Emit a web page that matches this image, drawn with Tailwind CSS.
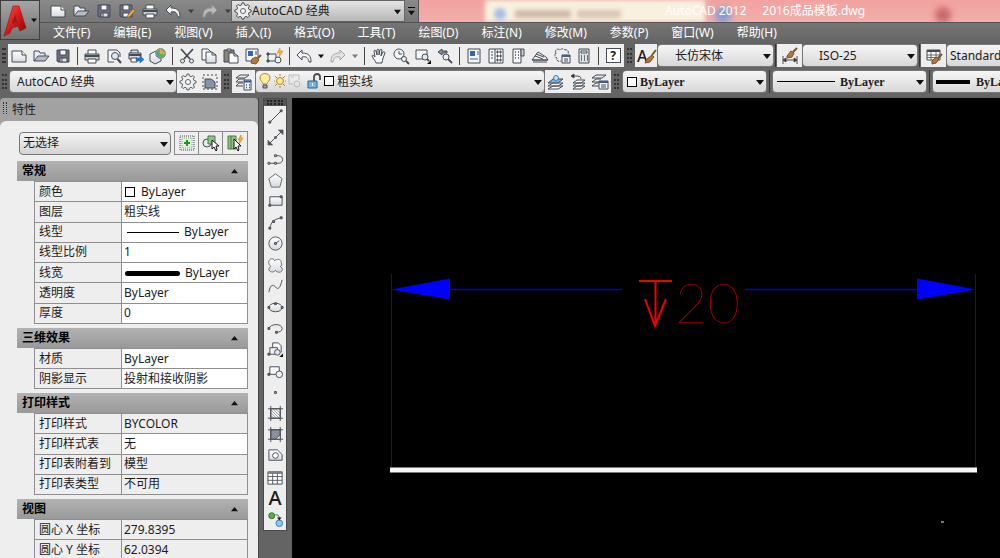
<!DOCTYPE html>
<html lang="zh-CN">
<head>
    <meta charset="UTF-8">
    <meta name="viewport" content="width=device-width, initial-scale=1.0">
    <title>AutoCAD 2012 - 2016成品模板.dwg</title>
    <script src="https://cdn.jsdelivr.net/npm/@tailwindcss/browser@4"></script>
</head>
<body class="h-screen flex flex-col overflow-hidden bg-[#646464] text-xs text-[#1c1c1c] font-['Noto_Sans','Noto_Sans_CJK_SC',sans-serif] [&_svg]:fill-none [&_svg]:stroke-[#454c57]">

    <!-- Icon set, colours inherited from the svg that uses each symbol -->
    <svg class="absolute size-0">
        <defs>
            <linearGradient id="paper" x1="0" y1="0" x2="0" y2="1"><stop offset="0" stop-color="#fff"/><stop offset="1" stop-color="#d5d9e0"/></linearGradient>
            <linearGradient id="red" x1="0" y1="0" x2="1" y2="1"><stop offset="0" stop-color="#ff5a50"/><stop offset=".5" stop-color="#d81818"/><stop offset="1" stop-color="#7e0808"/></linearGradient>
        </defs>
        <symbol id="new" viewBox="0 0 18 18"><path d="M2 4h10l4 4v7H2z" fill="url(#paper)"/><path d="M12 4v4h4" fill="#fff"/></symbol>
        <symbol id="open" viewBox="0 0 18 18"><path d="M2 14V4h5l1 2h5v3" fill="#e8ebef"/><path d="M2 14l4-5h11l-4 5z" fill="#b4becb"/></symbol>
        <symbol id="save" viewBox="0 0 18 18"><path d="M3 3h12v12H4l-1-1z" fill="#66707e"/><path d="M6 3h6v5H6z" fill="#f4f6f8"/><path d="M6 11h7v4H6z" fill="#dfe3e8"/><path d="M8 11v4"/></symbol>
        <symbol id="saveas" viewBox="0 0 18 18"><path d="M2 3h12v12H3l-1-1z" fill="#66707e"/><path d="M5 3h6v5H5zM5 11h6v4H5z" fill="#f4f6f8"/><path d="M9 16l1-3 5-6 2 1.500-5 6z" fill="#f0b24a" stroke="#a8641c"/></symbol>
        <symbol id="print" viewBox="0 0 18 18"><path d="M5 7V3h8v4" fill="#fff"/><path d="M2 7h14v6H2z" fill="#c9ced5"/><path d="M2 9h14" stroke-width="2"/><path d="M5 12h8v4H5z" fill="#fff"/></symbol>
        <symbol id="preview" viewBox="0 0 18 18"><path d="M9 15H3V3h9l3 3v4" fill="#f4f5f7"/><circle cx="10" cy="9" r="3.500" fill="#dfe8f2"/><path d="M12.500 12l3.500 4" stroke-width="2"/></symbol>
        <symbol id="publish" viewBox="0 0 18 18"><path d="M4 6V3h7v3M2 6h12v6H2z" fill="#d8dce1"/><path d="M2 8h12" stroke-width="2"/><path d="M4 11h6v4H4z" fill="#fff"/><path d="M9 11h4V9l4 3.500-4 3.500v-2H9z" fill="#2478c8" stroke="#1f5f9f" stroke-width=".5"/></symbol>
        <symbol id="globe" viewBox="0 0 18 18"><path d="M1 7l6-3 5 3v7l-6 3-5-3z" fill="url(#paper)"/><circle cx="11.500" cy="6.500" r="5" fill="#62b25c" stroke="#8a9198"/><path d="M11 2c2 1 4 2 5 5l-5 0z" fill="#f0a03c" stroke="none"/><path d="M8 4l3 5-2 1z" fill="#4f8fdc" stroke="none"/></symbol>
        <symbol id="cut" viewBox="0 0 18 18"><path d="M3 2l9 10M15 2L6 12" stroke-width="1.800"/><circle cx="4.500" cy="14" r="2"/><circle cx="13.500" cy="14" r="2"/></symbol>
        <symbol id="copy" viewBox="0 0 18 18"><path d="M2 2h6l3 3v8H2z" fill="#fafafa"/><path d="M6 5h6l4 3v8H6z" fill="url(#paper)"/><path d="M12 5v3h4"/></symbol>
        <symbol id="paste" viewBox="0 0 18 18"><path d="M2 3h10v12H2z" fill="#8a8377"/><path d="M5 2h4v2H5z" fill="#ddd"/><path d="M7 6h5l4 3v7H7z" fill="#fafbfc"/><path d="M12 6v3h4"/></symbol>
        <symbol id="match" viewBox="0 0 18 18"><path d="M2 2h12v12H2z" fill="#f3f5f7"/><path d="M4 4h5v5H4z" fill="#2f69b5" stroke="none"/><path d="M11 5h2M11 7h2"/><path d="M8 12l4-2 3 3-3 4-5-1z" fill="#b5763b" stroke="#8a5323"/><path d="M14 11l3-3" stroke="#8a5323" stroke-width="2"/></symbol>
        <symbol id="blockedit" viewBox="0 0 18 18"><path d="M2 7h8v7H2z" fill="#eef0f3"/><circle cx="12" cy="13" r="3" fill="#eef0f3"/><path d="M1 13h2v2H1zM1 6h2v2H1z" fill="#454c57"/><path d="M14 1l-3 5h3l-1 4 4-6h-3z" fill="#f7b928" stroke="#cf8a18" stroke-width=".6"/></symbol>
        <symbol id="undo" viewBox="0 0 18 18"><path d="M7 3L2 8l5 5v-3c5-1 6 1 7 5h2c0-6-2-9-9-9z" fill="#f6f7f8"/></symbol>
        <symbol id="redo" viewBox="0 0 18 18"><path d="M11 3l5 5-5 5v-3c-5-1-6 1-7 5H2c0-6 2-9 9-9z" fill="#e4e4e4" stroke="#a5a5a5"/></symbol>
        <symbol id="pan" viewBox="0 0 18 18"><path d="M6 16c0-2-3-4-4-7 0-1 1-1 2 0l1 1-1-6c0-1 2-1 2 0l1 4V3c0-1 2-1 2 0v5l1-5c0-1 2-1 2 0l-1 6 2-4c1-1 2 0 2 1l-2 5c0 2-1 3-1 5z" fill="#f6f7fa"/></symbol>
        <symbol id="zoomrt" viewBox="0 0 18 18"><circle cx="7" cy="7" r="5" fill="#f4f6f8"/><path d="M7 4v3h3"/><circle cx="12" cy="12" r="2.500" fill="#eef2f6"/><path d="M14 14l3 3" stroke-width="1.800"/></symbol>
        <symbol id="zoomwin" viewBox="0 0 18 18"><path d="M2 3h11v9H2z" fill="#f4f6f8"/><circle cx="11" cy="10" r="3" fill="#e2e9f2"/><path d="M13 12l2 2" stroke-width="1.800"/><path d="M17 13v4h-4z" fill="#111" stroke="none"/></symbol>
        <symbol id="zoomprev" viewBox="0 0 18 18"><path d="M6 2L2 5l4 3V6h5V4H6z" fill="#7e8ea3"/><circle cx="10" cy="10" r="3" fill="#eef2f6"/><path d="M12 12l4 4" stroke-width="1.800"/></symbol>
        <symbol id="props" viewBox="0 0 18 18"><path d="M3 2h12v14H3z" fill="#f4f6f8"/><path d="M5 4h5v5H5z" fill="#2f69b5" stroke="none"/><path d="M12 5h2M12 7h2M5 12h8" stroke="#2f69b5"/></symbol>
        <symbol id="design" viewBox="0 0 18 18"><path d="M2 2h14v14H2zM8 2v14" fill="#f4f6f8"/><path d="M4 5h2M4 8h2M4 11h2"/><path d="M10 4h1v2h-1zM13 4h1v2h-1zM10 8h1v2h-1zM13 8h1v2h-1zM10 12h1v2h-1zM13 12h1v2h-1z" fill="#4b7fb8"/></symbol>
        <symbol id="palettes" viewBox="0 0 18 18"><path d="M4 2h8v14H4z" fill="#f4f6f8"/><path d="M12 2h3v7h-3z" fill="#c8ced7"/><path d="M6 5h1M9 5h1M6 8h1M9 8h1M6 11h1M9 11h1" stroke-width="1.600"/></symbol>
        <symbol id="sheets" viewBox="0 0 18 18"><path d="M1 13L7 5l8 5 2 3z" fill="#eef0f3"/><path d="M4 9l8 3M5 7l8 3M1 13h16M2 15h14"/></symbol>
        <symbol id="markup" viewBox="0 0 18 18"><path d="M3 6c-2-3 2-5 4-3 2-2 4-1 5 0 3-1 4 2 3 4M3 6c-2 2-1 5 1 5-1 3 2 4 4 3" stroke-dasharray="3 1"/><path d="M9 8h8v8H9z" fill="#f5f6f8"/><path d="M9 9h8" stroke-width="2" stroke="#3d5f8d"/><path d="M11 12h4M11 14h4"/></symbol>
        <symbol id="calc" viewBox="0 0 18 18"><path d="M4 2h10v14H4z" fill="#dfe4ea"/><path d="M6 4h6v2H6z" fill="#fff"/><path d="M6 9h1M9 9h1M12 9h1M6 11h1M9 11h1M12 11h1M6 13h1M9 13h1M12 13h1" stroke-width="1.400"/></symbol>
        <symbol id="gear" viewBox="0 0 18 18"><path d="M8 1h2l.5 2 1.500.7 2-1.200 1.500 1.500L14.300 6l.7 1.500 2 .5v2l-2 .5-.7 1.500 1.200 2-1.500 1.500-2-1.200-1.500.7-.5 2H8l-.5-2L6 14.300l-2 1.200L2.500 14l1.200-2L3 10.500 1 10V8l2-.5L3.700 6 2.500 4 4 2.500l2 1.200L7.500 3z" fill="#eceef0" stroke="#5c6166"/><circle cx="9" cy="9" r="2.500" fill="#fff" stroke="#5c6166"/></symbol>
        <symbol id="wssave" viewBox="0 0 18 18"><path d="M2 2h14v14H2z" stroke-dasharray="2 2"/><path d="M4 6h6l4 3v6H4z" fill="#8594a6"/></symbol>
        <symbol id="layerprops" viewBox="0 0 18 18"><path d="M1 5l4-3h9l-4 3zM1 9l3-3h6M1 13l3-3h4M1 9h7M1 13h7"/><path d="M9 7h7v10H9z" fill="#edf1f6"/><path d="M9 8.500h7" stroke="#355e93" stroke-width="2"/><path d="M11 12h1M14 12h1M11 14.500h1M14 14.500h1" stroke="#355e93" stroke-width="1.400"/></symbol>
        <symbol id="layers" viewBox="0 0 18 18"><path d="M1 16l5-3h10l-5 3zM1 13l5-3h10l-5 3z" fill="#fff"/><path d="M1 10l5-4h10l-5 4z" fill="#78b3e2"/><circle cx="9" cy="5" r="2.500" fill="#c5e0f2" stroke="#3d7fb5"/></symbol>
        <symbol id="layerback" viewBox="0 0 18 18"><path d="M4 16l4-3h8l-4 3zM4 13l4-3h8l-4 3zM4 10l4-3h8l-4 3z" fill="#f8f8f8"/><path d="M12 6c0-3-3-3-7-3"/><path d="M5 1L2 3l3 2z" fill="#222"/></symbol>
        <symbol id="layerstate" viewBox="0 0 18 18"><path d="M1 5l4-3h10l-4 3zM1 9l4-3h5M1 13l4-3h3M1 9h7M1 13h7"/><path d="M8 8h9v8H8z" fill="#f5f7f9"/><path d="M8 9h9" stroke="#355e93" stroke-width="2"/><path d="M10 12h5M10 14h5"/></symbol>
        <symbol id="bulb" viewBox="0 0 14 18"><path d="M5 12c0-2-3-3-3-6 0-6 10-6 10 0 0 3-3 4-3 6z" fill="#ffec9e" stroke="#a98d3a"/><path d="M5 13h4v3H5z" fill="#aaa"/></symbol>
        <symbol id="sun" viewBox="0 0 14 18"><circle cx="7" cy="9" r="3.500" fill="#ffe883" stroke="#a98d3a"/><path d="M7 2v2M7 14v2M1 9h1M12 9h1M2 4l2 2M10 12l2 2M12 4l-2 2M4 12l-2 2" stroke="#a98d3a"/></symbol>
        <symbol id="vpfreeze" viewBox="0 0 14 18"><path d="M1 3h10v5M1 3v9h4M3 5h3" stroke="#bbb"/><circle cx="9" cy="12" r="3" stroke="#bbb"/></symbol>
        <symbol id="lock" viewBox="0 0 14 18"><path d="M7 9V5c0-4 6-4 6 0v3" stroke-width="1.800"/><path d="M1 9h9v7H1z" fill="#6fb7e6" stroke="#2d6389"/><path d="M5.500 11v3" stroke="#fff"/></symbol>
        <symbol id="textstyle" viewBox="0 0 20 18"><path d="M10 13l5-4 2 2-4 5-5 1z" fill="#b5763b" stroke="#80501f"/><path d="M15 9l4-5" stroke="#80501f" stroke-width="2"/></symbol>
        <symbol id="dimstyle" viewBox="0 0 18 18"><path d="M2 9v8M16 9v8M2 13h14"/><path d="M2 13l3-2v4zM16 13l-3-2v4z" fill="#333"/><path d="M6 9l4-5 3 2-2 4-5 1z" fill="#b5763b" stroke="#80501f"/><path d="M12 5l4-4" stroke="#80501f" stroke-width="2"/></symbol>
        <symbol id="tablestyle" viewBox="0 0 18 18"><path d="M2 3h13v10H2z" fill="#fff"/><path d="M2 4h13" stroke-width="2"/><path d="M2 8h13M2 10.500h13M6 4v9M11 4v9" stroke-width=".8"/><path d="M7 14l4-4 3 2-3 4-4 1z" fill="#b5763b" stroke="#80501f"/><path d="M13 11l4-4" stroke="#80501f" stroke-width="2"/></symbol>
        <symbol id="pickadd" viewBox="0 0 18 18"><path d="M2 2h14v14H2z" stroke-dasharray="1 1"/><path d="M4 4h10v10H4z" fill="#e2f3e0" stroke="#7aa578" stroke-dasharray="1 1"/><path d="M9 6v6M6 9h6" stroke="#179a17" stroke-width="2"/></symbol>
        <symbol id="pick" viewBox="0 0 18 18"><circle cx="5" cy="9" r="4" fill="#e8efe6"/><path d="M6 2h7v8H6z" fill="#8fc285" stroke="#4c7a45"/><path d="M10 6v9l2-2 2 4 1-1-1-4h3z" fill="#fff" stroke="#111"/></symbol>
        <symbol id="quick" viewBox="0 0 18 18"><path d="M2 2h8v13H2z" fill="#8fc285" stroke="#4c7a45"/><path d="M5 2v13" stroke="#4c7a45"/><path d="M8 5v10l2-2 2 4 1-1-1-4h3z" fill="#fff" stroke="#111"/><path d="M15 1l-3 5h2l-1 4 4-6h-2z" fill="#f7b928" stroke="#d8741a" stroke-width=".6"/></symbol>

        <symbol id="line" viewBox="0 0 18 18"><path d="M3 15L15 3"/><path d="M2 14h2v2H2zM14 2h2v2h-2z" fill="#777"/></symbol>
        <symbol id="xline" viewBox="0 0 18 18"><path d="M3 15L15 3"/><path d="M1 17v-5l5 5zM17 1v5l-5-5zM8 8h2v2H8z" fill="#555" stroke-width=".6"/></symbol>
        <symbol id="pline" viewBox="0 0 18 18"><path d="M2 13h10c6 0 6-8 0-8H9"/><path d="M1 12h2v2H1zM8 12h2v2H8zM8 4h2v2H8z" fill="#ddd"/></symbol>
        <symbol id="polygon" viewBox="0 0 18 18"><path d="M9 2l7 5-2.500 9h-9L2 7z" fill="url(#paper)" stroke="#666"/></symbol>
        <symbol id="rect" viewBox="0 0 18 18"><path d="M3 4h13v9H3z" fill="url(#paper)"/><path d="M2 12h2v2H2zM14 3h2v2h-2z" fill="#777"/></symbol>
        <symbol id="arc" viewBox="0 0 18 18"><path d="M3 16C4 8 8 5 16 4"/><path d="M2 14h2v2H2zM6 7h2v2H6zM14 3h2v2h-2z" fill="#777"/></symbol>
        <symbol id="circle" viewBox="0 0 18 18"><circle cx="9" cy="9" r="7" fill="url(#paper)" stroke="#555"/><path d="M9 9l4-3M8 8h2v2H8z"/></symbol>
        <symbol id="cloud" viewBox="0 0 18 18"><path d="M8 4c3-3 8-1 7 2 1 2 1 3-1 4 4 2 2 7-2 6-2 0-3-2-3-2-2 3-7 2-7-1 0-2 2-3 2-3C0 7 2 1 6 2c1 0 2 1 2 2z" fill="url(#paper)" stroke="#666"/></symbol>
        <symbol id="spline" viewBox="0 0 18 18"><path d="M2 15c1-5 2-8 5-7s3 5 6 2c1-1 2-4 3-8"/></symbol>
        <symbol id="ellipse" viewBox="0 0 18 18"><ellipse cx="9" cy="9" rx="7" ry="4.500" fill="url(#paper)"/><path d="M1 8h2v2H1zM8 4h2v2H8zM15 8h2v2h-2z" fill="#777"/></symbol>
        <symbol id="ellarc" viewBox="0 0 18 18"><path d="M2 9c1-5 14-6 14 0 0 3-3 4-6 4"/><path d="M1 8h2v2H1zM9 12h2v2H9z" fill="#777"/></symbol>
        <symbol id="insert" viewBox="0 0 18 18"><path d="M6 8V2h6l3 3v7" fill="#f8f8f8"/><path d="M3 7h8v7H3z" fill="#eef0f3"/><circle cx="11" cy="12" r="3" fill="#dde4ec"/><path d="M1 13h2v2H1z" fill="#555"/><path d="M17 13v4h-4z" fill="#111" stroke="none"/></symbol>
        <symbol id="block" viewBox="0 0 18 18"><path d="M3 4h10v8H3z" fill="#f6f7f9"/><circle cx="13" cy="12" r="3.500" fill="#eef0f3"/><path d="M1 11h2v2H1z" fill="#555"/></symbol>
        <symbol id="point" viewBox="0 0 18 18"><path d="M8 8h2v2H8z" fill="#aaa"/></symbol>
        <symbol id="hatch" viewBox="0 0 18 18"><path d="M4 4h10v10H4z" fill="#fafafa"/><path d="M4 1v16M14 1v16M1 4h16M1 14h16"/><path d="M4 5l9 9M4 8l6 6M6 4l8 8M9 4l5 5M4 11l3 3" stroke-width=".6"/></symbol>
        <symbol id="gradient" viewBox="0 0 18 18"><path d="M4 4h10v10H4z" fill="#8b919b"/><path d="M4 1v16M14 1v16M1 4h16M1 14h16"/><path d="M9 14l5-5v5z" fill="#e6e9ee"/></symbol>
        <symbol id="region" viewBox="0 0 18 18"><path d="M2 3h9l5 5v6H2z" fill="url(#paper)"/><circle cx="9" cy="9" r="3" fill="#fff"/></symbol>
        <symbol id="table" viewBox="0 0 18 18"><path d="M1 3h15v13H1z" fill="#fff"/><path d="M1 4h15" stroke-width="2.500" stroke="#7a7f88"/><path d="M1 8h15M1 12h15M6 5v11M11 5v11" stroke-width=".9"/></symbol>
        <symbol id="addsel" viewBox="0 0 18 18"><circle cx="5" cy="5" r="3.200" fill="#59ad4a" stroke="#35722b"/><circle cx="13" cy="13" r="3.500" fill="#8cc8f4" stroke="#3a7db1"/><path d="M9 4c3 0 4 1 4 4"/><path d="M10.500 7h5l-2.500 3z" fill="#222" stroke="none"/></symbol>
        <symbol id="down" viewBox="0 0 8 8"><path d="M0 2h8L4 7z" fill="#111" stroke="none"/></symbol>
        <symbol id="up" viewBox="0 0 8 8"><path d="M0 6h8L4 1z" fill="#111" stroke="none"/></symbol>
    </svg>

    <header class="flex shrink-0 bg-gradient-to-b from-[#8a8a8a] to-[#646464]">
        <!-- Application menu -->
        <button aria-label="应用程序菜单" class="flex items-center justify-center gap-1 w-10 h-10 shrink-0 border border-[#3f3f3f] bg-gradient-to-b from-[#a5a5a5] to-[#727272]">
            <svg class="w-6 h-9" viewBox="0 0 24 36"><path d="M10 4h6l7 22-6 3-2-5-6 2-2 5-6 3z" fill="url(#red)" stroke="#8e1010" stroke-width=".6"/><path d="M12 12l2 8-5 2z" fill="#8b2020" stroke="none"/><path d="M10 4L1 34l3-10z" fill="#ff8c80" stroke="none"/></svg>
            <svg class="size-[6px]"><use href="#down"/></svg>
        </button>

        <div class="flex-1 min-w-0">
            <div class="flex h-[23px] border-b border-[#555]">
                <!-- Quick access -->
                <div class="flex items-center pl-[6px] [&_button]:w-[23px] [&_button]:flex [&_button]:justify-center [&_svg]:size-[18px]">
                    <button aria-label="新建"><svg><use href="#new"/></svg></button>
                    <button aria-label="打开"><svg><use href="#open"/></svg></button>
                    <button aria-label="保存"><svg><use href="#save"/></svg></button>
                    <button aria-label="另存为"><svg><use href="#saveas"/></svg></button>
                    <button aria-label="打印"><svg><use href="#print"/></svg></button>
                    <button aria-label="放弃"><svg><use href="#undo"/></svg></button>
                    <svg class="size-[6px]! mx-1 opacity-60"><use href="#down"/></svg>
                    <button aria-label="重做"><svg class="opacity-60"><use href="#redo"/></svg></button>
                    <svg class="size-[6px]! ml-1 opacity-60"><use href="#down"/></svg>
                </div>
                <div class="relative w-[174px]">
                    <svg class="absolute left-[3px] top-[2px] size-[18px]"><use href="#gear"/></svg>
                    <select aria-label="工作空间" class="appearance-none w-full h-[22px] pl-[20px] border border-[#666] bg-gradient-to-b from-[#e4e4e4] to-[#b8b8b8]"><option>AutoCAD 经典</option></select>
                    <svg class="absolute left-[3px] top-[2px] size-[18px] pointer-events-none"><use href="#gear"/></svg>
                    <svg class="absolute right-[4px] top-2 size-[7px]"><use href="#down"/></svg>
                </div>
                <button aria-label="自定义快速访问工具栏" class="flex flex-col items-center justify-center gap-px w-[14px] border-r border-[#555]">
                    <span class="w-[7px] h-px bg-black"></span>
                    <svg class="size-[7px]"><use href="#down"/></svg>
                </button>
                <!-- Window caption -->
                <div class="relative flex-1 flex items-center overflow-hidden bg-gradient-to-b from-[#f1a2a0] to-[#f3adaa]">
                    <div class="absolute left-[66px] w-[220px] h-full bg-[#f8f1df] blur-[2px]"></div>
                    <div class="absolute left-[75px] top-2 size-3 rounded-full bg-[#a9bce8] blur-[2px]"></div>
                    <div class="absolute left-[96px] top-[10px] w-14 h-2 bg-[#cdb9a9] blur-[2px]"></div>
                    <div class="absolute left-[158px] top-[10px] w-11 h-2 bg-[#d9c6b5] blur-[2px]"></div>
                    <div class="absolute left-[296px] top-[7px] size-4 rounded-full bg-[#7b9ed8] blur-[3px]"></div>
                    <div class="absolute left-[516px] top-[7px] size-4 rounded-full bg-[#c96868] blur-[3px]"></div>
                    <h1 class="relative pl-[246px] flex gap-4 text-white whitespace-nowrap"><span>AutoCAD 2012</span><span>2016成品模板.dwg</span></h1>
                </div>
            </div>
            <!-- Menu bar -->
            <nav class="flex items-center h-5 pl-[13px] gap-[23px] text-white whitespace-nowrap">
                <a href="#">文件(F)</a>
                <a href="#">编辑(E)</a>
                <a href="#">视图(V)</a>
                <a href="#">插入(I)</a>
                <a href="#">格式(O)</a>
                <a href="#">工具(T)</a>
                <a href="#">绘图(D)</a>
                <a href="#">标注(N)</a>
                <a href="#">修改(M)</a>
                <a href="#">参数(P)</a>
                <a href="#">窗口(W)</a>
                <a href="#">帮助(H)</a>
            </nav>
        </div>
    </header>

    <!-- Standard toolbar + styles -->
    <div class="flex shrink-0 mt-px h-[23px] overflow-hidden">
        <div class="w-2 shrink-0 py-1 px-[2px]"><div class="h-full border-x-2 border-dotted border-[#333]"></div></div>
        <div class="flex shrink-0 items-center bg-[#eee] [&_button]:w-[22px] [&_button]:flex [&_button]:justify-center [&_svg]:size-[18px] [&_hr]:w-px [&_hr]:h-[18px] [&_hr]:mx-[3px] [&_hr]:border-0 [&_hr]:bg-[#444]">
            <button aria-label="新建"><svg><use href="#new"/></svg></button>
            <button aria-label="打开"><svg><use href="#open"/></svg></button>
            <button aria-label="保存"><svg><use href="#save"/></svg></button>
            <hr>
            <button aria-label="打印"><svg><use href="#print"/></svg></button>
            <button aria-label="打印预览"><svg><use href="#preview"/></svg></button>
            <button aria-label="发布"><svg><use href="#publish"/></svg></button>
            <button aria-label="三维DWF"><svg><use href="#globe"/></svg></button>
            <hr>
            <button aria-label="剪切"><svg><use href="#cut"/></svg></button>
            <button aria-label="复制"><svg><use href="#copy"/></svg></button>
            <button aria-label="粘贴"><svg><use href="#paste"/></svg></button>
            <button aria-label="特性匹配"><svg><use href="#match"/></svg></button>
            <button aria-label="块编辑器"><svg><use href="#blockedit"/></svg></button>
            <hr>
            <button aria-label="放弃"><svg><use href="#undo"/></svg></button>
            <svg class="size-[6px]! mx-[3px]"><use href="#down"/></svg>
            <button aria-label="重做"><svg><use href="#redo"/></svg></button>
            <svg class="size-[6px]! mx-[3px] opacity-50"><use href="#down"/></svg>
            <hr>
            <button aria-label="平移"><svg><use href="#pan"/></svg></button>
            <button aria-label="实时缩放"><svg><use href="#zoomrt"/></svg></button>
            <button aria-label="窗口缩放"><svg><use href="#zoomwin"/></svg></button>
            <button aria-label="缩放上一个"><svg><use href="#zoomprev"/></svg></button>
            <hr>
            <button aria-label="特性"><svg><use href="#props"/></svg></button>
            <button aria-label="设计中心"><svg><use href="#design"/></svg></button>
            <button aria-label="工具选项板"><svg><use href="#palettes"/></svg></button>
            <button aria-label="图纸集"><svg><use href="#sheets"/></svg></button>
            <button aria-label="标记集"><svg><use href="#markup"/></svg></button>
            <button aria-label="计算器"><svg><use href="#calc"/></svg></button>
            <hr>
            <button aria-label="帮助"><span class="size-[15px] border border-[#454c57] bg-white text-xs leading-[13px] font-bold">?</span></button>
        </div>
        <div class="w-[11px] shrink-0 py-1 px-[3px]"><div class="h-full border-x-2 border-dotted border-[#333]"></div></div>
        <button aria-label="文字样式" class="relative w-[22px] shrink-0 bg-[#eee] text-left pl-[2px] text-base leading-5 font-medium">A<svg class="absolute left-[2px] top-[2px] w-5 h-[18px]"><use href="#textstyle"/></svg></button>
        <div class="relative w-[117px] shrink-0">
            <select aria-label="文字样式" class="appearance-none w-full h-full pl-[17px] rounded-sm border border-[#777] bg-gradient-to-b from-[#f6f6f6] to-[#d8d8d8]"><option>长仿宋体</option></select>
            <svg class="absolute right-[3px] top-2 size-2"><use href="#down"/></svg>
        </div>
        <div class="w-px mx-px bg-[#333] shrink-0"></div>
        <button aria-label="标注样式" class="flex justify-center items-center w-[25px] shrink-0 bg-[#eee]"><svg class="size-[18px]"><use href="#dimstyle"/></svg></button>
        <div class="relative w-[116px] shrink-0">
            <select aria-label="标注样式" class="appearance-none w-full h-full pl-[16px] rounded-sm border border-[#777] bg-gradient-to-b from-[#f6f6f6] to-[#d8d8d8]"><option>ISO-25</option></select>
            <svg class="absolute right-[3px] top-2 size-2"><use href="#down"/></svg>
        </div>
        <div class="w-px mx-px bg-[#333] shrink-0"></div>
        <button aria-label="表格样式" class="flex justify-center items-center w-[25px] shrink-0 bg-[#eee]"><svg class="size-[18px]"><use href="#tablestyle"/></svg></button>
        <select aria-label="表格样式" class="appearance-none w-[116px] shrink-0 pl-[3px] rounded-sm border border-[#777] bg-gradient-to-b from-[#f6f6f6] to-[#d8d8d8]"><option>Standard</option></select>
    </div>

    <!-- Workspace, layers, object properties -->
    <div class="flex shrink-0 mt-[3px] mb-[5px] h-[23px] overflow-hidden">
        <div class="w-[9px] shrink-0 py-1 px-[2px]"><div class="h-full border-x-2 border-dotted border-[#333]"></div></div>
        <div class="relative w-[168px] shrink-0">
            <select aria-label="工作空间" class="appearance-none w-full h-full pl-[7px] rounded-sm border border-[#777] bg-gradient-to-b from-[#f6f6f6] to-[#d8d8d8]"><option>AutoCAD 经典</option></select>
            <svg class="absolute right-[3px] top-2 size-2"><use href="#down"/></svg>
        </div>
        <div class="flex items-center shrink-0 bg-[#eee] [&_button]:w-[22px] [&_button]:flex [&_button]:justify-center [&_svg]:size-[18px]">
            <button aria-label="工作空间设置"><svg><use href="#gear"/></svg></button>
            <button aria-label="我的工作空间"><svg><use href="#wssave"/></svg></button>
        </div>
        <div class="w-[11px] shrink-0 py-1 px-[3px]"><div class="h-full border-x-2 border-dotted border-[#333]"></div></div>
        <button aria-label="图层特性" class="flex justify-center items-center w-[23px] shrink-0 bg-[#eee]"><svg class="size-[18px]"><use href="#layerprops"/></svg></button>
        <div class="relative w-[290px] shrink-0">
            <select aria-label="图层" class="appearance-none w-full h-full pl-[81px] rounded-sm border border-[#777] bg-gradient-to-b from-[#f6f6f6] to-[#d8d8d8]"><option>粗实线</option></select>
            <div class="absolute left-[3px] top-[2px] flex items-center gap-px pointer-events-none [&_svg]:w-[14px] [&_svg]:h-[18px]">
                <svg><use href="#bulb"/></svg>
                <svg><use href="#sun"/></svg>
                <svg><use href="#vpfreeze"/></svg>
                <svg class="ml-1"><use href="#lock"/></svg>
                <span class="size-[10px] ml-[2px] border border-black bg-white"></span>
            </div>
            <svg class="absolute right-[3px] top-2 size-2"><use href="#down"/></svg>
        </div>
        <div class="flex items-center shrink-0 bg-[#eee] [&_button]:w-[22px] [&_button]:flex [&_button]:justify-center [&_svg]:size-[18px]">
            <button aria-label="置为当前"><svg><use href="#layers"/></svg></button>
            <button aria-label="上一个图层"><svg><use href="#layerback"/></svg></button>
            <button aria-label="图层状态"><svg><use href="#layerstate"/></svg></button>
        </div>
        <div class="w-[11px] shrink-0 py-1 px-[3px]"><div class="h-full border-x-2 border-dotted border-[#333]"></div></div>
        <div class="relative w-[145px] shrink-0 font-['Liberation_Serif',serif] font-bold">
            <select aria-label="颜色" class="appearance-none w-full h-full pl-[17px] rounded-sm border border-[#777] bg-gradient-to-b from-[#f6f6f6] to-[#d8d8d8]"><option>ByLayer</option></select>
            <span class="absolute left-[5px] top-[7px] size-[10px] border border-black bg-white"></span>
            <svg class="absolute right-[3px] top-2 size-2"><use href="#down"/></svg>
        </div>
        <div class="w-px mx-[2px] bg-[#333] shrink-0"></div>
        <div class="relative w-[155px] shrink-0 font-['Liberation_Serif',serif] font-bold">
            <select aria-label="线型" class="appearance-none w-full h-full pl-[67px] rounded-sm border border-[#777] bg-gradient-to-b from-[#f6f6f6] to-[#d8d8d8]"><option>ByLayer</option></select>
            <span class="absolute left-[5px] top-[11px] w-[58px] h-px bg-black"></span>
            <svg class="absolute right-[3px] top-2 size-2"><use href="#down"/></svg>
        </div>
        <div class="w-px mx-[2px] bg-[#333] shrink-0"></div>
        <div class="relative w-[155px] shrink-0 font-['Liberation_Serif',serif] font-bold">
            <select aria-label="线宽" class="appearance-none w-full h-full pl-[43px] rounded-sm border border-[#777] bg-gradient-to-b from-[#f6f6f6] to-[#d8d8d8]"><option>ByLayer</option></select>
            <span class="absolute left-[4px] top-[10px] w-[34px] h-1 bg-black"></span>
        </div>
    </div>

    <main class="flex flex-1 min-h-0">
        <!-- Properties palette -->
        <aside class="flex flex-col w-[258px] shrink-0 rounded-t bg-[#a2a2a2]">
            <div class="flex items-center gap-[5px] h-[23px] shrink-0 pl-[3px]">
                <div class="w-1 h-3 mb-1 border-x border-dotted border-[#333]"></div>
                <h2>特性</h2>
            </div>
            <div class="flex-1 min-h-0 overflow-hidden rounded-t-md bg-[#eee] pl-[17px] pr-[10px] pt-[10px]">
                <div class="flex items-center gap-[3px] pl-[2px] mb-[6px]">
                    <div class="relative flex-1">
                        <select aria-label="选择对象" class="appearance-none w-full h-[23px] pl-[3px] rounded-sm border border-[#777] bg-gradient-to-b from-[#f4f4f4] to-[#d4d4d4]"><option>无选择</option></select>
                        <svg class="absolute right-[3px] top-2 size-2"><use href="#down"/></svg>
                    </div>
                    <div class="flex border border-[#8a8a8a] divide-x divide-[#8a8a8a] [&_button]:w-6 [&_button]:h-[22px] [&_button]:flex [&_button]:items-center [&_button]:justify-center [&_svg]:size-[18px]">
                        <button aria-label="切换PICKADD"><svg><use href="#pickadd"/></svg></button>
                        <button aria-label="选择"><svg><use href="#pick"/></svg></button>
                        <button aria-label="快速选择"><svg><use href="#quick"/></svg></button>
                    </div>
                </div>

                <div class="flex flex-col gap-1 [&_h3]:flex [&_h3]:items-center [&_h3]:justify-between [&_h3]:h-5 [&_h3]:pl-[5px] [&_h3]:pr-[10px] [&_h3]:font-bold [&_h3]:text-black [&_h3]:bg-gradient-to-b [&_h3]:from-[#b2b2b2] [&_h3]:to-[#999] [&_h3_svg]:size-[7px] [&_table]:ml-[17px] [&_table]:w-[214px] [&_table]:table-fixed [&_table]:border-collapse [&_table]:leading-4 [&_th]:w-[87px] [&_th]:font-normal [&_th]:text-left [&_th]:pl-1 [&_th]:border [&_th]:border-[#8f8f8f] [&_td]:border [&_td]:border-[#8f8f8f] [&_td]:pl-[2px] [&_td]:whitespace-nowrap">
                    <section>
                        <h3>常规 <svg><use href="#up"/></svg></h3>
                        <table class="h-[143px] [&_td]:bg-white">
                            <tr><th>颜色</th><td><span class="inline-block size-[10px] border border-black ml-px mr-[6px] align-[-1px]"></span>ByLayer</td></tr>
                            <tr><th>图层</th><td>粗实线</td></tr>
                            <tr><th>线型</th><td><span class="inline-block w-[52px] h-px bg-black ml-[3px] mr-[5px] align-middle"></span>ByLayer</td></tr>
                            <tr><th>线型比例</th><td>1</td></tr>
                            <tr><th>线宽</th><td><span class="inline-block w-[55px] h-[5px] rounded-sm bg-black ml-px mr-[5px] align-middle"></span>ByLayer</td></tr>
                            <tr><th>透明度</th><td>ByLayer</td></tr>
                            <tr><th>厚度</th><td>0</td></tr>
                        </table>
                    </section>
                    <section>
                        <h3>三维效果 <svg><use href="#up"/></svg></h3>
                        <table class="h-[41px] [&_td]:bg-white">
                            <tr><th>材质</th><td>ByLayer</td></tr>
                            <tr><th>阴影显示</th><td>投射和接收阴影</td></tr>
                        </table>
                    </section>
                    <section>
                        <h3>打印样式 <svg><use href="#up"/></svg></h3>
                        <table class="h-[82px]">
                            <tr><th>打印样式</th><td>BYCOLOR</td></tr>
                            <tr><th>打印样式表</th><td class="bg-white">无</td></tr>
                            <tr><th>打印表附着到</th><td>模型</td></tr>
                            <tr><th>打印表类型</th><td>不可用</td></tr>
                        </table>
                    </section>
                    <section>
                        <h3>视图 <svg><use href="#up"/></svg></h3>
                        <table class="h-[41px]">
                            <tr><th>圆心 X 坐标</th><td>279.8395</td></tr>
                            <tr><th>圆心 Y 坐标</th><td>62.0394</td></tr>
                        </table>
                    </section>
                </div>
            </div>
        </aside>

        <!-- Draw toolbar -->
        <div class="w-[34px] shrink-0 pl-1 border-l border-[#444]">
            <div class="flex flex-col w-6 h-[433px] border border-[#4a4a4a] bg-[#eee] [&_button]:flex-1 [&_button]:flex [&_button]:items-center [&_button]:justify-center [&_button]:min-h-0 [&_svg]:size-[17px]">
                <div class="h-[7px] shrink-0 bg-[#555] px-[3px] py-px"><div class="h-full border-y-2 border-dotted border-[#222]"></div></div>
                <button aria-label="直线"><svg><use href="#line"/></svg></button>
                <button aria-label="构造线"><svg><use href="#xline"/></svg></button>
                <button aria-label="多段线"><svg><use href="#pline"/></svg></button>
                <button aria-label="多边形"><svg><use href="#polygon"/></svg></button>
                <button aria-label="矩形"><svg><use href="#rect"/></svg></button>
                <button aria-label="圆弧"><svg><use href="#arc"/></svg></button>
                <button aria-label="圆"><svg><use href="#circle"/></svg></button>
                <button aria-label="修订云线"><svg><use href="#cloud"/></svg></button>
                <button aria-label="样条曲线"><svg><use href="#spline"/></svg></button>
                <button aria-label="椭圆"><svg><use href="#ellipse"/></svg></button>
                <button aria-label="椭圆弧"><svg><use href="#ellarc"/></svg></button>
                <button aria-label="插入块"><svg><use href="#insert"/></svg></button>
                <button aria-label="创建块"><svg><use href="#block"/></svg></button>
                <button aria-label="点"><svg><use href="#point"/></svg></button>
                <button aria-label="图案填充"><svg><use href="#hatch"/></svg></button>
                <button aria-label="渐变色"><svg><use href="#gradient"/></svg></button>
                <button aria-label="面域"><svg><use href="#region"/></svg></button>
                <button aria-label="表格"><svg><use href="#table"/></svg></button>
                <button aria-label="多行文字" class="text-xl leading-5 font-medium">A</button>
                <button aria-label="添加选定对象"><svg><use href="#addsel"/></svg></button>
            </div>
        </div>

        <!-- Model space -->
        <div class="flex-1 min-w-0 bg-black overflow-hidden">
            <svg class="block w-[708px] h-[460px]" viewBox="0 0 708 460">
                <path d="M99.500 176v194M683.500 176v194" stroke="#0000ff"/>
                <path d="M157 191.500h173M453 191.500h173" stroke="#0000d8" stroke-width="1.500"/>
                <path d="M99 191.500l59-11v21zM684 191.500l-59-11v21z" fill="#0000ff" stroke="none"/>
                <path d="M98 372h587" stroke="#f8f8f8" stroke-width="5"/>
                <path d="M347 183h33M363.500 183v44M353 201l10 27 11-27" stroke="#f00000" stroke-width="2"/>
                <text x="383" y="225" class="font-['Lato'] font-thin text-[56px]" fill="#e00000" stroke="none">20</text>
                <path d="M649 424h3" stroke="#777" stroke-width="2"/>
            </svg>
        </div>
    </main>

</body>
</html>
